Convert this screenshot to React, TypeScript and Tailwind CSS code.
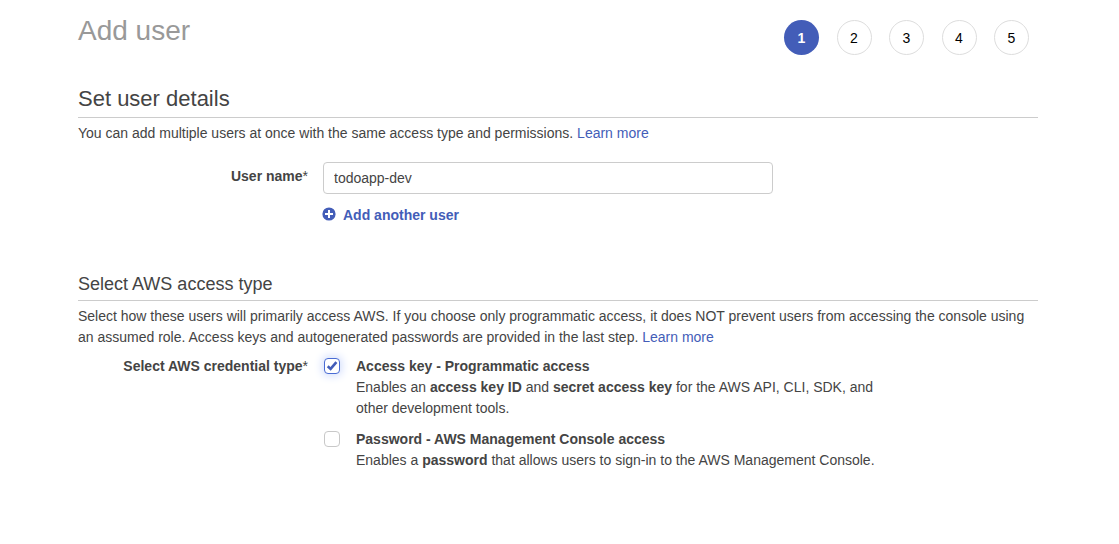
import { useState } from "react";

const steps = [1, 2, 3, 4, 5];

function PlusCircle() {
  return (
    <svg viewBox="0 0 14 14" className="mt-0.5 size-[14px] shrink-0" aria-hidden="true">
      <circle cx="7" cy="7" r="6.6" fill="#435db8" />
      <path d="M7 3v8M3 7h8" stroke="#fff" strokeWidth="2" fill="none" />
    </svg>
  );
}

function Credential({
  id,
  title,
  checked,
  onToggle,
  children,
}: {
  id: string;
  title: string;
  checked: boolean;
  onToggle: () => void;
  children: React.ReactNode;
}) {
  return (
    <div className="flex items-start gap-4">
      <span className="relative mt-0.5 flex size-4 shrink-0">
        <input
          id={id}
          type="checkbox"
          checked={checked}
          onChange={onToggle}
          className="size-4 appearance-none rounded border border-[#c8c8c8] bg-white checked:border-[#4a6cd4] checked:shadow-[0_0_8px_2px_#d3defc]"
        />
        {checked && (
          <svg viewBox="0 0 16 16" className="pointer-events-none absolute inset-0 size-4" aria-hidden="true">
            <path d="M3.7 8.3l2.9 2.6L12.4 4.2" fill="none" stroke="#435db8" strokeWidth="2.6" />
          </svg>
        )}
      </span>
      <div>
        <label htmlFor={id} className="block font-bold">
          {title}
        </label>
        <p>{children}</p>
      </div>
    </div>
  );
}

export default function App() {
  const [name, setName] = useState("todoapp-dev");
  const [access, setAccess] = useState(true);
  const [password, setPassword] = useState(false);

  return (
    <main className="mx-auto max-w-[1119px] bg-white pt-3 pr-[81px] pb-10 pl-[78px] font-['Liberation_Sans',Arial,sans-serif] text-sm leading-[21px] text-[#444]">
      <header className="flex items-start justify-between pr-[9px]">
        <h1 className="text-[28px] leading-[38px] text-[#999]">Add user</h1>
        <ol className="flex w-[245px] justify-between pt-2">
          {steps.map((s) => (
            <li
              key={s}
              aria-current={s === 1 ? "step" : undefined}
              className={
                s === 1
                  ? "flex size-[35px] items-center justify-center rounded-full bg-[#435db8] pt-px font-bold text-white"
                  : "flex size-[35px] items-center justify-center rounded-full border border-[#ddd] pt-px text-black"
              }
            >
              {s}
            </li>
          ))}
        </ol>
      </header>

      <section className="pt-7">
        <h2 className="border-b border-[#ccc] pt-px pb-[3px] text-[22px] leading-[30px]">Set user details</h2>
        <p className="pt-[5px]">
          You can add multiple users at once with the same access type and permissions.{" "}
          <a href="#users" className="text-[#435db8]">Learn more</a>
        </p>
        <div className="flex gap-[15px] pt-[18px]">
          <label htmlFor="user-name" className="w-[230px] shrink-0 pt-1 text-right font-bold">
            User name<span className="font-normal">*</span>
          </label>
          <div className="flex w-[450px] flex-col items-start gap-[11px]">
            <input
              id="user-name"
              type="text"
              value={name}
              onChange={(e) => setName(e.target.value)}
              className="h-8 w-full rounded-[4px] border border-[#ccc] px-[10px] outline-none"
            />
            <button type="button" className="-ml-px flex items-start gap-[7px] font-bold text-[#435db8]">
              <PlusCircle />
              Add another user
            </button>
          </div>
        </div>
      </section>

      <section className="pt-[46px]">
        <h2 className="border-b border-[#ccc] pb-1 text-lg leading-6">Select AWS access type</h2>
        <p className="pt-[5px]">
          Select how these users will primarily access AWS. If you choose only programmatic access, it does NOT prevent
          users from accessing the console using an assumed role. Access keys and autogenerated passwords are provided
          in the last step. <a href="#access" className="text-[#435db8]">Learn more</a>
        </p>
        <fieldset className="flex gap-4 pt-2" aria-labelledby="credential-type">
          <span id="credential-type" className="w-[230px] shrink-0 text-right font-bold">
            Select AWS credential type<span className="font-normal">*</span>
          </span>
          <div className="flex max-w-[558px] flex-col gap-[10px]">
            <Credential
              id="access-key"
              title="Access key - Programmatic access"
              checked={access}
              onToggle={() => setAccess(!access)}
            >
              Enables an <strong>access key ID</strong> and <strong>secret access key</strong> for the AWS API, CLI,
              SDK, and other development tools.
            </Credential>
            <Credential
              id="console-password"
              title="Password - AWS Management Console access"
              checked={password}
              onToggle={() => setPassword(!password)}
            >
              Enables a <strong>password</strong> that allows users to sign-in to the AWS Management Console.
            </Credential>
          </div>
        </fieldset>
      </section>
    </main>
  );
}
